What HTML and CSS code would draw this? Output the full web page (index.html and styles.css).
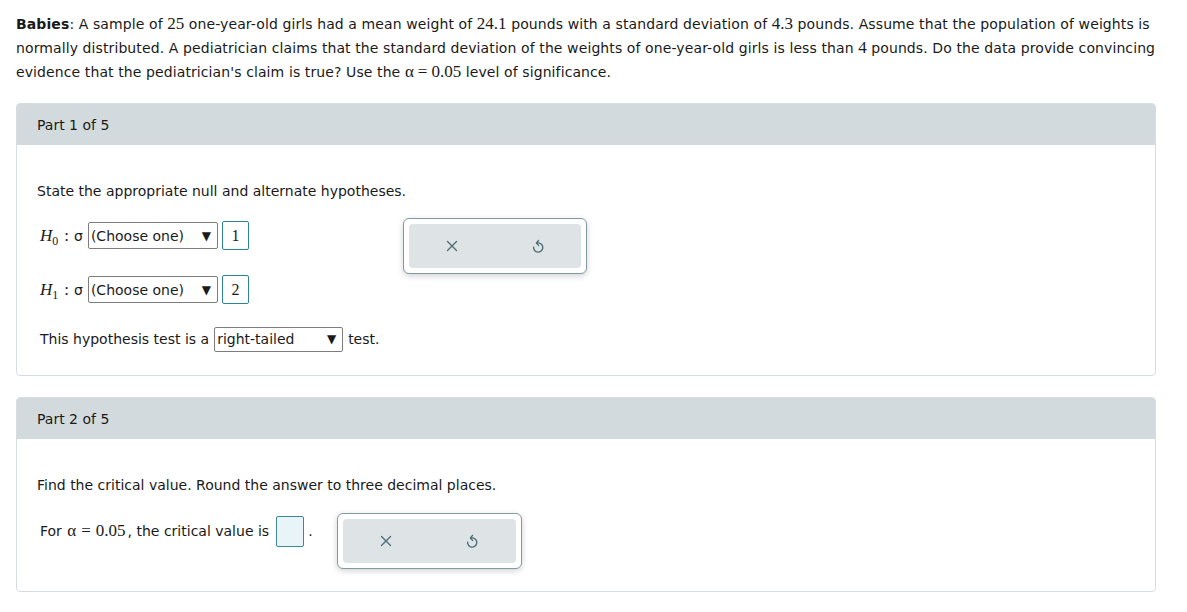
FILE: index.html
```html
<!DOCTYPE html>
<html>
<head>
<meta charset="utf-8">
<link rel="stylesheet" href="styles.css">
</head>
<body>
<div class="page">
  <p class="intro"><b>Babies</b>: A sample of <span class="m">25</span> one-year-old girls had a mean weight of <span class="m">24.1</span> pounds with a standard deviation of <span class="m">4.3</span> pounds. Assume that the population of weights is normally distributed. A pediatrician claims that the standard deviation of the weights of one-year-old girls is less than <span class="m">4</span> pounds. Do the data provide convincing evidence that the pediatrician's claim is true? Use the <span class="m">α<span class="eq">=</span>0.05</span> level of significance.</p>

  <section class="card card1">
    <div class="card-head">Part 1 of 5</div>
    <div class="card-body">
      <p class="prompt">State the appropriate null and alternate hypotheses.</p>
      <div class="work">
        <div class="answers">
          <div class="row row-h0">
            <span class="m hyp"><i>H</i><sub>0</sub></span><span class="m colon">:</span><span class="sigma">σ</span>
            <span class="select sel-choose">(Choose one)<span class="arrow">▼</span></span>
            <span class="box num">1</span>
          </div>
          <div class="row row-h1">
            <span class="m hyp"><i>H</i><sub>1</sub></span><span class="m colon">:</span><span class="sigma">σ</span>
            <span class="select sel-choose">(Choose one)<span class="arrow">▼</span></span>
            <span class="box num">2</span>
          </div>
          <div class="row row-test">
            <span>This hypothesis test is a</span>
            <span class="select sel-tail">right-tailed<span class="arrow">▼</span></span>
            <span>test.</span>
          </div>
        </div>
        <div class="tools tools1">
          <div class="tools-inner">
            <svg class="ico" viewBox="0 0 16 16" width="16" height="16"><path d="M3.5 3.5 L12.5 12.5 M12.5 3.5 L3.5 12.5" stroke="#4d6e78" stroke-width="1.4" fill="none" stroke-linecap="round"/></svg>
            <svg class="ico" viewBox="0 0 16 16" width="16" height="16"><path d="M7.2 5 A4.6 4.6 0 1 1 3.6 9.2" stroke="#4d6e78" stroke-width="1.4" fill="none" stroke-linecap="round"/><path d="M8.6 2.4 L6.4 5 L8.6 7.4" stroke="#4d6e78" stroke-width="1.4" fill="none" stroke-linecap="round" stroke-linejoin="round"/></svg>
          </div>
        </div>
      </div>
    </div>
  </section>

  <section class="card card2">
    <div class="card-head">Part 2 of 5</div>
    <div class="card-body">
      <p class="prompt">Find the critical value. Round the answer to three decimal places.</p>
      <div class="work">
        <div class="answers">
          <div class="row row-cv">
            <span>For <span class="m">α<span class="eq">=</span>0.05</span>, the critical value is</span>
            <span class="box blank"></span><span class="dot">.</span>
          </div>
        </div>
        <div class="tools tools2">
          <div class="tools-inner">
            <svg class="ico" viewBox="0 0 16 16" width="16" height="16"><path d="M3.5 3.5 L12.5 12.5 M12.5 3.5 L3.5 12.5" stroke="#4d6e78" stroke-width="1.4" fill="none" stroke-linecap="round"/></svg>
            <svg class="ico" viewBox="0 0 16 16" width="16" height="16"><path d="M7.2 5 A4.6 4.6 0 1 1 3.6 9.2" stroke="#4d6e78" stroke-width="1.4" fill="none" stroke-linecap="round"/><path d="M8.6 2.4 L6.4 5 L8.6 7.4" stroke="#4d6e78" stroke-width="1.4" fill="none" stroke-linecap="round" stroke-linejoin="round"/></svg>
          </div>
        </div>
      </div>
    </div>
  </section>
</div>
</body>
</html>
```

FILE: styles.css
```css
html, body {
  margin: 0;
  padding: 0;
  background: #ffffff;
}
body {
  font-family: "DejaVu Sans", Verdana, sans-serif;
  font-size: 14px;
  color: #1a1a1a;
}
.page {
  padding: 12px 31px 0 16px;
}
.intro {
  margin: 0;
  line-height: 24px;
  letter-spacing: 0.1px;
}
.m {
  font-family: "Liberation Serif", "Times New Roman", serif;
  font-size: 17px;
  letter-spacing: 0;
}
.eq {
  margin: 0 4px;
}
.card {
  border: 1px solid #d6dde1;
  border-radius: 4px;
  overflow: hidden;
}
.card1 {
  margin-top: 19px;
  height: 271px;
}
.card2 {
  margin-top: 21px;
  height: 193px;
}
.card-head {
  background: #d3dadd;
  height: 41px;
  line-height: 43px;
  padding-left: 20px;
}
.card-body {
  padding: 34px 20px 0 20px;
}
.prompt {
  margin: 0;
  line-height: 24px;
}
.work {
  display: flex;
  align-items: flex-start;
  gap: 24px;
  margin-left: 3px;
}
.card1 .work {
  margin-top: 17px;
}
.card2 .work {
  margin-top: 18px;
}
.answers {
  display: flex;
  flex-direction: column;
}
.row {
  display: flex;
  align-items: center;
}
.row-h0 {
  height: 31px;
}
.row-h1 {
  height: 31px;
  margin-top: 23px;
}
.row-test {
  height: 24px;
  margin-top: 22px;
}
.row-cv {
  height: 32px;
}
.row-cv .m {
  margin: 0 2px 0 1px;
}
.row-cv .eq {
  margin: 0 5px;
}
.hyp {
  font-size: 17px;
}
.hyp sub {
  font-size: 12px;
  vertical-align: -4px;
  line-height: 0;
}
.colon {
  margin: 0 5px 0 6px;
}
.sigma {
  font-size: 14px;
  margin-right: 5px;
}
.select {
  display: inline-flex;
  align-items: center;
  justify-content: space-between;
  border: 1px solid #7d7d7d;
  border-radius: 2px;
  height: 25px;
  padding: 0 6px 0 2px;
  box-sizing: border-box;
  background: #fff;
}
.sel-choose {
  width: 130px;
  height: 27px;
}
.sel-tail {
  width: 129px;
  margin: 0 5px 0 5px;
}
.arrow {
  font-size: 12px;
  margin-left: 8px;
}
.box {
  display: inline-block;
  box-sizing: border-box;
  border: 1px solid #2c8494;
  border-radius: 2px;
}
.num {
  width: 27px;
  height: 29px;
  margin-left: 4px;
  text-align: center;
  line-height: 27px;
  font-family: "Liberation Serif", serif;
  font-size: 16px;
}
.blank {
  width: 28px;
  height: 31px;
  margin-left: 7px;
  background: #e8f4f8;
  border-color: #3a8898;
}
.dot {
  margin-left: 4px;
}
.tools {
  border: 1px solid #7f9aa0;
  border-radius: 6px;
  padding: 5px;
  box-shadow: 0 2px 6px rgba(0, 0, 0, 0.18);
  background: #fff;
}
.tools1 {
  width: 184px;
  box-sizing: border-box;
  height: 56px;
  margin-top: -2px;
}
.tools2 {
  width: 185px;
  box-sizing: border-box;
  height: 56px;
  margin-top: -2px;
}
.tools-inner {
  background: #dee4e6;
  border-radius: 4px;
  height: 44px;
  display: flex;
  align-items: center;
  justify-content: space-around;
}
.ico {
  display: block;
}
```
